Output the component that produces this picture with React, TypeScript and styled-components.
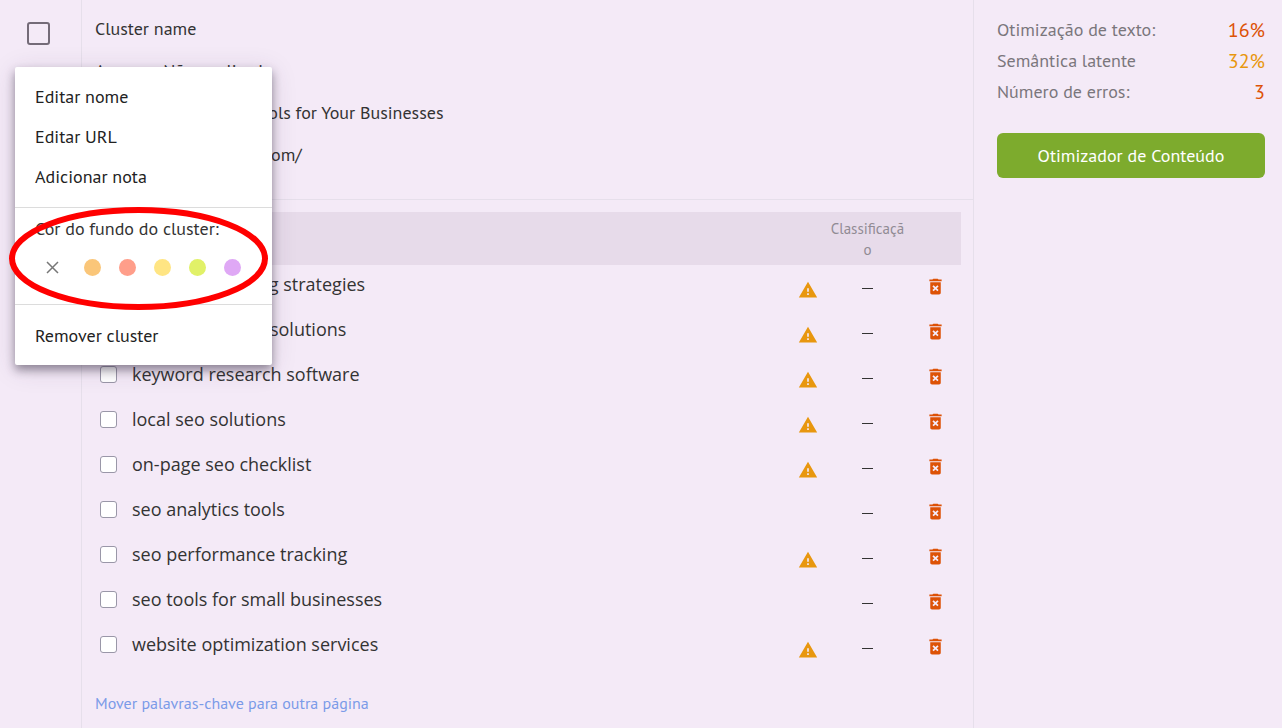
import React, { useState } from 'react';
import styled, { createGlobalStyle } from 'styled-components';
import { MdDeleteForever, MdWarning } from 'react-icons/md';

const colors = {
  page: '#f4eaf7',
  band: '#e7dbea',
  line: '#e6dfeb',
  text: '#333',
  muted: '#7a767c',
  faint: '#918b94',
  danger: '#dd5206',
  warning: '#e8970f',
  action: '#7dab2d',
  link: '#7b9be8',
};

const GlobalStyle = createGlobalStyle`
  * { box-sizing: border-box; }
  body {
    margin: 0;
    background: ${colors.page};
    color: ${colors.text};
    font-family: 'PT Sans', 'Open Sans', sans-serif;
    font-size: 18px;
    line-height: 24px;
  }
  button {
    padding: 0;
    border: 0;
    background: none;
    color: inherit;
    font: inherit;
    cursor: pointer;
  }
`;

const Page = styled.div`
  display: grid;
  grid-template-columns: 82px minmax(0, 1fr) 309px;
  min-height: 100vh;
`;

const SelectColumn = styled.aside`
  position: relative;
  border-right: 1px solid ${colors.line};
  padding: 22px 27px;
`;

const ClusterCheckbox = styled.input`
  appearance: none;
  display: block;
  width: 23px;
  height: 23px;
  margin: 0;
  border: 2px solid #746b78;
  border-radius: 3px;
`;

const Menu = styled.div`
  position: absolute;
  z-index: 2;
  top: 67px;
  left: 15px;
  width: 257px;
  padding: 10px 0 9px;
  border-radius: 2px;
  background: #fff;
  box-shadow: 0 5px 10px rgba(40, 30, 50, 0.45), 0 4px 26px rgba(60, 40, 80, 0.15);
  color: #222;
`;

const MenuItem = styled.button`
  display: block;
  width: 100%;
  height: 40px;
  padding: 0 20px;
  text-align: left;
`;

const ColorSection = styled.div`
  height: 98px;
  margin: 10px 0 11px;
  padding: 9px 20px;
  border: solid #dcdcdc;
  border-width: 1px 0;
`;

const ColorLabel = styled.div`
  color: ${colors.text};
`;

const Swatches = styled.div`
  display: flex;
  align-items: center;
  gap: 18px;
  height: 52px;
  padding-left: 11px;
`;

const ClearColor = styled.button`
  width: 13px;
  height: 13px;
  margin-right: 7px;
  line-height: 0;
`;

const Swatch = styled.button<{ $color: string }>`
  width: 17px;
  height: 17px;
  border-radius: 50%;
  background: ${(p) => p.$color};
`;

const Highlight = styled.svg`
  position: absolute;
  top: 140px;
  left: -6px;
  pointer-events: none;
`;

const Main = styled.main`
  min-width: 0;
`;

const Summary = styled.header`
  height: 200px;
  padding: 8px 13px;
  border-bottom: 1px solid ${colors.line};
`;

const SummaryLine = styled.div`
  line-height: 42px;
`;

const Keywords = styled.section`
  padding: 12px 12px 12px 13px;
`;

const Table = styled.table`
  width: 100%;
  table-layout: fixed;
  border-collapse: collapse;
`;

const HeadCell = styled.th`
  height: 53px;
  padding: 0 3px;
  background: ${colors.band};
  color: ${colors.faint};
  font-size: 15px;
  font-weight: 400;
  line-height: 21px;
  word-break: break-all;
`;

const Row = styled.tr`
  height: 45px;
`;

const KeywordCell = styled.td`
  padding: 7px 0 0 5px;
  vertical-align: top;
`;

const KeywordLabel = styled.label`
  display: flex;
  align-items: center;
  gap: 15px;
  font-family: 'Open Sans', sans-serif;
`;

const KeywordCheckbox = styled.input`
  appearance: none;
  width: 17px;
  height: 17px;
  margin: 0;
  border: 1px solid #9a97a8;
  border-radius: 3px;
  background: #fff;
`;

const IconCell = styled.td<{ $color: string }>`
  padding: 0 0 2px;
  color: ${(p) => p.$color};
  line-height: 0;
  text-align: center;
  vertical-align: middle;
`;

const WarningCell = styled(IconCell)`
  padding: 4px 0 0;
`;

const RankCell = styled.td`
  padding: 0 0 2px;
  text-align: center;
`;

const Dash = styled.span`
  display: inline-block;
  width: 11px;
  height: 1px;
  background: ${colors.text};
  vertical-align: middle;
`;

const MoveLink = styled.a`
  display: inline-block;
  margin-top: 21px;
  color: ${colors.link};
  font-size: 16px;
  text-decoration: none;
`;

const Stats = styled.aside`
  border-left: 1px solid ${colors.line};
  padding: 14px 17px 14px 23px;
`;

const StatList = styled.dl`
  margin: 0 0 26px;
`;

const StatRow = styled.div`
  display: flex;
  align-items: center;
  justify-content: space-between;
  height: 31px;
`;

const StatName = styled.dt`
  color: ${colors.muted};
`;

const StatValue = styled.dd<{ $color: string }>`
  margin: 0;
  color: ${(p) => p.$color};
  font-size: 20px;
`;

const OptimizeButton = styled.button`
  width: 100%;
  height: 45px;
  border-radius: 6px;
  background: ${colors.action};
  color: #fff;
`;

const swatches = [
  { name: 'Laranja', color: '#fac679' },
  { name: 'Vermelho', color: '#ff9e8a' },
  { name: 'Amarelo', color: '#ffe583' },
  { name: 'Verde', color: '#e1f168' },
  { name: 'Roxo', color: '#dfa8f5' },
];

const keywords = [
  { name: 'course marketing strategies', warning: true },
  { name: 'ecommerce seo solutions', warning: true },
  { name: 'keyword research software', warning: true },
  { name: 'local seo solutions', warning: true },
  { name: 'on-page seo checklist', warning: true },
  { name: 'seo analytics tools', warning: false },
  { name: 'seo performance tracking', warning: true },
  { name: 'seo tools for small businesses', warning: false },
  { name: 'website optimization services', warning: true },
];

const stats = [
  { name: 'Otimização de texto:', value: '16%', color: colors.danger },
  { name: 'Semântica latente', value: '32%', color: colors.warning },
  { name: 'Número de erros:', value: '3', color: colors.danger },
];

function ClusterMenu() {
  return (
    <Menu>
      <MenuItem>Editar nome</MenuItem>
      <MenuItem>Editar URL</MenuItem>
      <MenuItem>Adicionar nota</MenuItem>
      <ColorSection>
        <ColorLabel>Cor do fundo do cluster:</ColorLabel>
        <Swatches>
          <ClearColor aria-label="Sem cor">
            <svg width="13" height="13" viewBox="0 0 13 13" fill="none" stroke="#777" strokeWidth="1.5">
              <path d="M1 1L12 12M12 1L1 12" />
            </svg>
          </ClearColor>
          {swatches.map((s) => (
            <Swatch key={s.name} $color={s.color} aria-label={s.name} />
          ))}
        </Swatches>
      </ColorSection>
      <MenuItem>Remover cluster</MenuItem>
      <Highlight width="260" height="103" viewBox="0 0 260 103" fill="none">
        <ellipse cx="129.5" cy="51.5" rx="126.5" ry="48.5" stroke="#f00" strokeWidth="6" />
      </Highlight>
    </Menu>
  );
}

export default function App() {
  const [selected, setSelected] = useState<string[]>([]);
  const toggle = (name: string) =>
    setSelected((now) => (now.includes(name) ? now.filter((n) => n !== name) : [...now, name]));

  return (
    <Page>
      <GlobalStyle />
      <SelectColumn>
        <ClusterCheckbox type="checkbox" aria-label="Selecionar cluster" />
        <ClusterMenu />
      </SelectColumn>

      <Main>
        <Summary>
          <SummaryLine>Cluster name</SummaryLine>
          <SummaryLine>Acessos: Não analisado</SummaryLine>
          <SummaryLine>Best SEO Marketing Tools for Your Businesses</SummaryLine>
          <SummaryLine>https://www.example.com/</SummaryLine>
        </Summary>
        <Keywords>
          <Table>
            <colgroup>
              <col />
              <col width="36" />
              <col width="83" />
              <col width="52" />
            </colgroup>
            <thead>
              <tr>
                <HeadCell />
                <HeadCell />
                <HeadCell scope="col">Classificação</HeadCell>
                <HeadCell />
              </tr>
            </thead>
            <tbody>
              {keywords.map((k) => (
                <Row key={k.name}>
                  <KeywordCell>
                    <KeywordLabel>
                      <KeywordCheckbox
                        type="checkbox"
                        checked={selected.includes(k.name)}
                        onChange={() => toggle(k.name)}
                      />
                      {k.name}
                    </KeywordLabel>
                  </KeywordCell>
                  <WarningCell $color={colors.warning}>{k.warning && <MdWarning size={20} />}</WarningCell>
                  <RankCell>
                    <Dash />
                  </RankCell>
                  <IconCell $color={colors.danger}>
                    <button aria-label={`Remover ${k.name}`}>
                      <MdDeleteForever size={21} />
                    </button>
                  </IconCell>
                </Row>
              ))}
            </tbody>
          </Table>
          <MoveLink href="#mover">Mover palavras-chave para outra página</MoveLink>
        </Keywords>
      </Main>

      <Stats>
        <StatList>
          {stats.map((s) => (
            <StatRow key={s.name}>
              <StatName>{s.name}</StatName>
              <StatValue $color={s.color}>{s.value}</StatValue>
            </StatRow>
          ))}
        </StatList>
        <OptimizeButton>Otimizador de Conteúdo</OptimizeButton>
      </Stats>
    </Page>
  );
}
